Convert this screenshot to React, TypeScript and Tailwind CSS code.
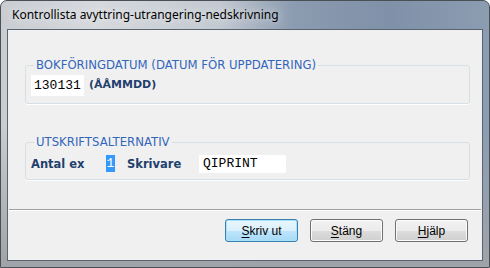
import React from "react";

const ui = { fontFamily: '"DejaVu Sans", Verdana, sans-serif' };
const mono = { fontFamily: '"Liberation Mono", "Courier New", monospace' };
const btnFont = { fontFamily: '"Liberation Sans", Arial, sans-serif' };

function Btn({ label, def }: { label: string; def?: boolean }) {
  const first = label.charAt(0);
  const rest = label.slice(1);
  return (
    <div
      className={
        "w-[73px] h-[23px] rounded-[3px] border flex items-center justify-center text-[12px] text-black " +
        (def
          ? "border-[#3c7fb1] shadow-[inset_0_0_0_1px_#a6e4fb]"
          : "border-[#707070] shadow-[inset_0_0_0_1px_#fcfcfc]")
      }
      style={{
        ...btnFont,
        background: def
          ? "linear-gradient(to bottom,#eaf6fd 0%,#d9f0fc 50%,#bee6fd 51%,#a7d9f5 100%)"
          : "linear-gradient(to bottom,#f2f2f2 0%,#ebebeb 50%,#dddddd 51%,#cfcfcf 100%)",
      }}
    >
      <span>
        <span className="underline underline-offset-2">{first}</span>
        {rest}
      </span>
    </div>
  );
}

export default function App() {
  return (
    <div className="w-[490px] h-[268px] bg-white">
      <div
        className="w-[490px] h-[268px] rounded-t-[7px] border border-[#4a4f55] flex flex-col overflow-hidden"
        style={{
          background:
            "linear-gradient(to right,#c9cdd2 0%,#d6d9dd 20%,#c2c9d1 45%,#8b9bb0 60%,#7f91a8 80%,#8c9db2 100%)",
        }}
      >
        {/* title bar */}
        <div className="h-[28px] flex items-center pl-[11px] shrink-0">
          <span
            className="text-[12px] text-black"
            style={{ fontFamily: '"Noto Sans", "Open Sans", sans-serif', textShadow: "0 0 8px rgba(255,255,255,0.9)" }}
          >
            Kontrollista avyttring-utrangering-nedskrivning
          </span>
        </div>
        {/* frame sides + client */}
        <div
          className="flex-1 flex px-[6px] pb-[6px]"
          style={{
            background:
              "linear-gradient(to bottom, rgba(255,255,255,0) 0%, rgba(160,164,170,0.0) 40%, #9fa3a8 100%)",
          }}
        >
          <div className="flex-1 border border-[#5a6470] bg-[#f0f0f0] flex flex-col" style={ui}>
            {/* group 1 */}
            <fieldset className="ml-[17px] mt-[28px] w-[445px] h-[46px] border border-[#d5dfe5] rounded-[3px] pl-[5px] shadow-[0_1px_0_#ffffff]">
              <legend className="ml-[3px] px-[2px] text-[11.7px] text-[#3366bb] leading-[14px]">
                BOKFÖRINGDATUM (DATUM FÖR UPPDATERING)
              </legend>
              <div className="flex items-center mt-[3px]">
                <div className="w-[53px] h-[21px] bg-white flex items-center pl-[3px] text-[13px] text-black" style={mono}>
                  130131
                </div>
                <span className="ml-[5px] text-[11px] font-bold text-[#1f3f6e]">(ÅÅMMDD)</span>
              </div>
            </fieldset>
            {/* group 2 */}
            <fieldset className="ml-[17px] mt-[31px] w-[445px] h-[45px] border border-[#d5dfe5] rounded-[3px] pl-[5px] shadow-[0_1px_0_#ffffff]">
              <legend className="ml-[3px] px-[2px] text-[11.7px] text-[#3366bb] leading-[14px]">UTSKRIFTSALTERNATIV</legend>
              <div className="flex items-center mt-[4px]">
                <span className="text-[11.5px] font-bold text-[#1f3f6e] w-[73px] pt-[3px]">Antal ex</span>
                <div className="w-[13px] h-[21px] bg-[#f0f0f0] flex items-center justify-center">
                  <span className="bg-[#3399ff] text-white text-[13px] leading-[17px] px-[1px]" style={mono}>
                    1
                  </span>
                </div>
                <span className="ml-[10px] text-[11.5px] font-bold text-[#1f3f6e] w-[72px] pt-[3px]">Skrivare</span>
                <div className="w-[87px] h-[18px] bg-white flex items-center pl-[4px] text-[13px] text-black" style={mono}>
                  QIPRINT
                </div>
              </div>
            </fieldset>
            {/* separator */}
            <div className="mt-[29px] mx-[1px] h-[2px] border-t border-[#a0a0a0] border-b border-b-white" />
            <div className="flex justify-end gap-[12px] pr-[14px] mt-[8px]">
              <Btn label="Skriv ut" def />
              <Btn label="Stäng" />
              <Btn label="Hjälp" />
            </div>
          </div>
        </div>
      </div>
    </div>
  );
}
